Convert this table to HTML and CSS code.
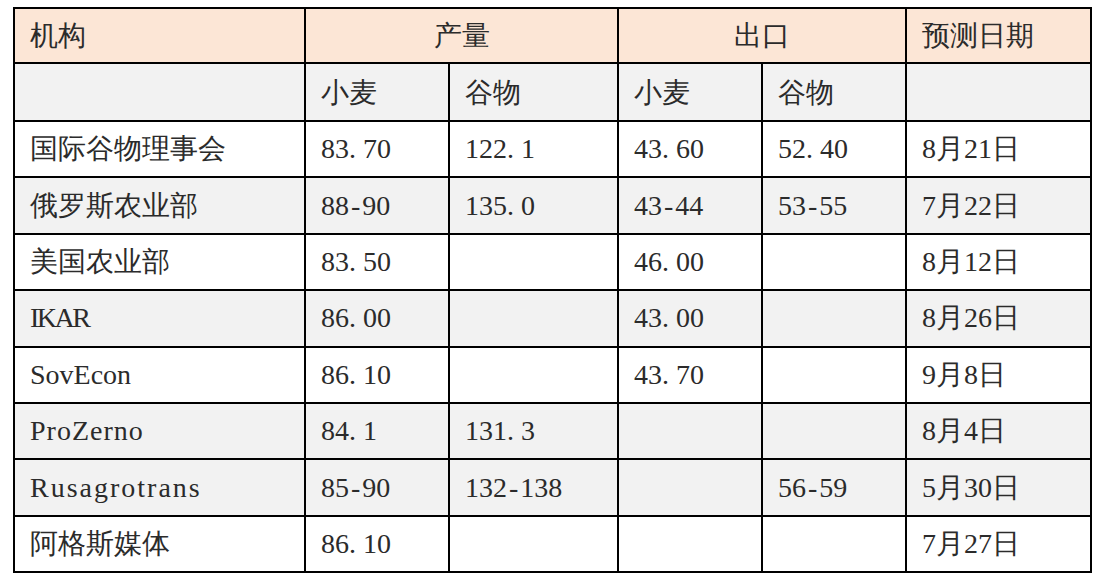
FILE: index.html
```html
<!DOCTYPE html>
<html>
<head>
<meta charset="utf-8">
<link rel="stylesheet" href="styles.css">
</head>
<body>
<div class="page">
  <div class="grid-table" role="table">
    <div class="row head" role="row">
      <div class="cell" role="columnheader">机构</div>
      <div class="cell center span2" role="columnheader">产量</div>
      <div class="cell center span2" role="columnheader">出口</div>
      <div class="cell" role="columnheader">预测日期</div>
    </div>
    <div class="row shade sub" role="row">
      <div class="cell"></div>
      <div class="cell" role="columnheader">小麦</div>
      <div class="cell" role="columnheader">谷物</div>
      <div class="cell" role="columnheader">小麦</div>
      <div class="cell" role="columnheader">谷物</div>
      <div class="cell"></div>
    </div>
    <div class="row" role="row">
      <div class="cell">国际谷物理事会</div>
      <div class="cell">83<span class="pt">.</span>70</div>
      <div class="cell">122<span class="pt">.</span>1</div>
      <div class="cell">43<span class="pt">.</span>60</div>
      <div class="cell">52<span class="pt">.</span>40</div>
      <div class="cell">8月21日</div>
    </div>
    <div class="row shade" role="row">
      <div class="cell">俄罗斯农业部</div>
      <div class="cell">88<span class="dash">-</span>90</div>
      <div class="cell">135<span class="pt">.</span>0</div>
      <div class="cell">43<span class="dash">-</span>44</div>
      <div class="cell">53<span class="dash">-</span>55</div>
      <div class="cell">7月22日</div>
    </div>
    <div class="row" role="row">
      <div class="cell">美国农业部</div>
      <div class="cell">83<span class="pt">.</span>50</div>
      <div class="cell"></div>
      <div class="cell">46<span class="pt">.</span>00</div>
      <div class="cell"></div>
      <div class="cell">8月12日</div>
    </div>
    <div class="row shade" role="row">
      <div class="cell tight">IKAR</div>
      <div class="cell">86<span class="pt">.</span>00</div>
      <div class="cell"></div>
      <div class="cell">43<span class="pt">.</span>00</div>
      <div class="cell"></div>
      <div class="cell">8月26日</div>
    </div>
    <div class="row" role="row">
      <div class="cell">SovEcon</div>
      <div class="cell">86<span class="pt">.</span>10</div>
      <div class="cell"></div>
      <div class="cell">43<span class="pt">.</span>70</div>
      <div class="cell"></div>
      <div class="cell">9月8日</div>
    </div>
    <div class="row shade" role="row">
      <div class="cell wide">ProZerno</div>
      <div class="cell">84<span class="pt">.</span>1</div>
      <div class="cell">131<span class="pt">.</span>3</div>
      <div class="cell"></div>
      <div class="cell"></div>
      <div class="cell">8月4日</div>
    </div>
    <div class="row shade" role="row">
      <div class="cell wider">Rusagrotrans</div>
      <div class="cell">85<span class="dash">-</span>90</div>
      <div class="cell">132<span class="dash">-</span>138</div>
      <div class="cell"></div>
      <div class="cell">56<span class="dash">-</span>59</div>
      <div class="cell">5月30日</div>
    </div>
    <div class="row" role="row">
      <div class="cell">阿格斯媒体</div>
      <div class="cell">86<span class="pt">.</span>10</div>
      <div class="cell"></div>
      <div class="cell"></div>
      <div class="cell"></div>
      <div class="cell">7月27日</div>
    </div>
  </div>
</div>
</body>
</html>
```

FILE: styles.css
```css
html, body {
  margin: 0;
  padding: 0;
  background: #ffffff;
  font-family: "Liberation Serif", serif;
}

.page {
  padding: 7px 0 0 13px;
}

.grid-table {
  display: grid;
  grid-template-columns: 289px 142px 167px 142px 142px 183px;
  grid-template-rows: 53px 56px repeat(8, 54.4px);
  gap: 2px;
  padding: 2px;
  background: #000000;
  width: max-content;
}

.row {
  display: contents;
}

.cell {
  display: flex;
  align-items: center;
  padding: 0 8px 0 15px;
  background: #ffffff;
  font-family: "Liberation Serif", serif;
  font-size: 28px;
  font-weight: 400;
  line-height: 1;
  color: #2b2b2b;
  white-space: nowrap;
  overflow: hidden;
}

.center {
  justify-content: center;
  padding: 0;
}

.span2 {
  grid-column: span 2;
}

.head > .cell {
  background: #fce6d6;
}

.shade > .cell {
  background: #f2f2f2;
}

.sub > .cell {
  padding-top: 2px;
}

.pt {
  letter-spacing: 7px;
}

.dash {
  padding: 0 2px;
}

.tight {
  letter-spacing: -2.5px;
}

.wide {
  letter-spacing: 1px;
}

.wider {
  letter-spacing: 2px;
}
```
